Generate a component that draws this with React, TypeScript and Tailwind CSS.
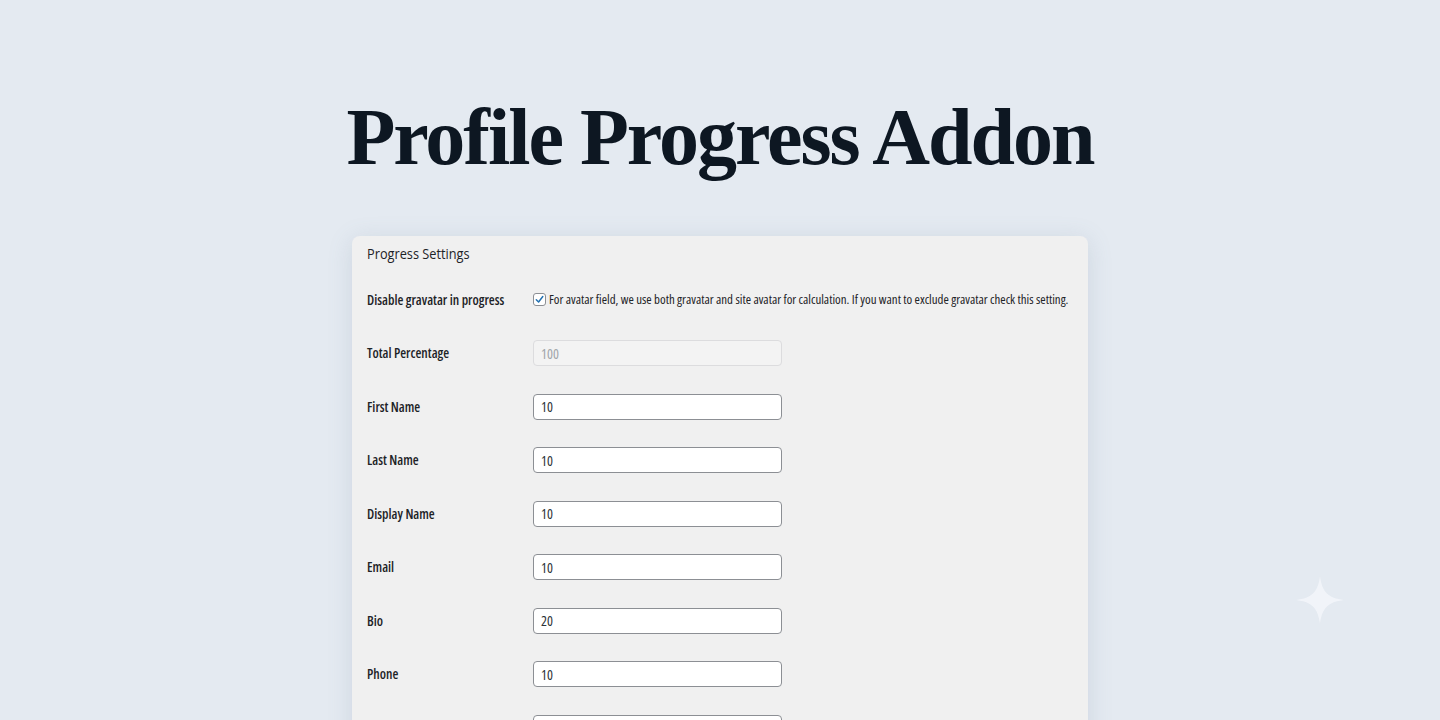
import React from 'react';

const rows: { label: string; value: string; disabled?: boolean }[] = [
  { label: 'Total Percentage', value: '100', disabled: true },
  { label: 'First Name', value: '10' },
  { label: 'Last Name', value: '10' },
  { label: 'Display Name', value: '10' },
  { label: 'Email', value: '10' },
  { label: 'Bio', value: '20' },
  { label: 'Phone', value: '10' },
  { label: '', value: '' },
];

const ui = { fontFamily: "'Open Sans', 'Liberation Sans', sans-serif" };

const Sparkle: React.FC = () => (
  <svg width="52" height="52" viewBox="0 0 52 52" className="absolute left-[1294px] top-[574px]">
    <path d="M26 2 C28 18 34 24 50 26 C34 28 28 34 26 50 C24 34 18 28 2 26 C18 24 24 18 26 2 Z" fill="#f3f6fa" opacity="0.85" />
  </svg>
);

export default function App() {
  return (
    <div className="relative w-[1440px] h-[720px] overflow-hidden bg-[#e4eaf1]" style={ui}>
      <Sparkle />
      <div className="flex flex-col items-center">
        <h1
          className="mt-[89px] h-[96px] text-[80px] leading-[96px] font-bold tracking-[-2px] text-[#0d1722]"
          style={{ fontFamily: "'Liberation Serif', 'Times New Roman', serif" }}
        >
          Profile Progress Addon
        </h1>
        <div className="mt-[51px] w-[736px] h-[520px] rounded-lg bg-[#f0f0f0] shadow-[0_4px_24px_rgba(100,120,150,0.18)] px-[15px]">
          <div className="h-[37px] pt-[5px]">
            <span className="inline-block origin-left scale-x-[0.85] text-[15px] leading-[20px] font-medium text-[#1d2327]">
              Progress Settings
            </span>
          </div>
          <div className="flex items-center h-[53.5px]">
            <div className="w-[166px] shrink-0 text-[13.5px] font-semibold text-[#1d2327] font-stretch-condensed">Disable gravatar in progress</div>
            <div className="flex items-center gap-[3px]">
              <span className="shrink-0 w-[13px] h-[13px] rounded-[3px] border border-[#8c8f94] bg-white flex items-center justify-center">
                <svg width="11" height="11" viewBox="0 0 12 12">
                  <path d="M2.5 6.3 L5 8.8 L9.6 2.8" fill="none" stroke="#2271b1" strokeWidth="1.6" strokeLinecap="round" strokeLinejoin="round" />
                </svg>
              </span>
              <span className="whitespace-nowrap text-[12.9px] text-[#1d2327] font-stretch-condensed">
                For avatar field, we use both gravatar and site avatar for calculation. If you want to exclude gravatar check this setting.
              </span>
            </div>
          </div>
          {rows.map((r, i) => (
            <div key={i} className="flex items-center h-[53.5px]">
              <div className="w-[166px] shrink-0 text-[13.5px] font-semibold text-[#1d2327] font-stretch-condensed">{r.label}</div>
              <div
                className={
                  r.disabled
                    ? 'w-[249px] h-[26px] rounded-[4px] border border-[#dcdcde] bg-[#f3f3f3] px-[7px] flex items-center text-[14px] text-[#a0a5aa] font-stretch-condensed'
                    : 'w-[249px] h-[26px] rounded-[4px] border border-[#8c8f94] bg-white px-[7px] flex items-center text-[14px] text-[#2c3338] font-stretch-condensed'
                }
              >
                {r.value}
              </div>
            </div>
          ))}
        </div>
      </div>
    </div>
  );
}
